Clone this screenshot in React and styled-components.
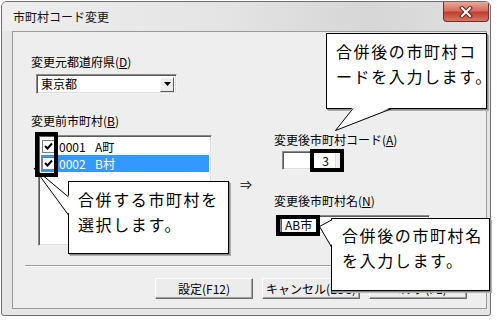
import React from 'react';
import styled, { createGlobalStyle } from 'styled-components';

const Global = createGlobalStyle`
  html, body { margin: 0; padding: 0; background: #fff; }
  body { font-family: "Noto Sans CJK JP", "Noto Sans", sans-serif; }
  #root { width: 497px; height: 321px; overflow: hidden; }
`;

const UI_FONT = `"Noto Sans CJK JP", "Noto Sans", sans-serif`;

const Stage = styled.div`
  position: relative;
  width: 497px;
  height: 321px;
  box-sizing: border-box;
  padding: 1px 0 0 1px;
`;

const Window = styled.div`
  width: 490px;
  height: 315px;
  box-sizing: border-box;
  border: 1px solid #6d6d6d;
  border-radius: 6px 6px 3px 3px;
  background: #e6e6e6;
  display: flex;
  flex-direction: column;
  overflow: hidden;
`;

const TitleBar = styled.div`
  height: 29px;
  display: flex;
  align-items: flex-start;
  justify-content: space-between;
  padding-left: 11px;
  background: linear-gradient(to right, #eeeeee, #e4e4e4 45%, #d6d6d6 75%, #e0e0e0);
`;

const Title = styled.div`
  font-family: ${UI_FONT};
  font-size: 12px;
  line-height: 14px;
  margin-top: 8px;
  color: #101010;
`;

const CloseButton = styled.div`
  width: 46px;
  height: 20px;
  margin-right: 1px;
  box-sizing: border-box;
  border: 1px solid #7b2b22;
  border-top: none;
  border-radius: 0 0 4px 4px;
  background: linear-gradient(#e7a899, #d66f5e 45%, #c2402f 55%, #d77563);
  display: flex;
  align-items: center;
  justify-content: center;
`;

const Client = styled.div`
  flex: 1;
  margin: 0 3px 6px 10px;
  border: 1px solid #9a9a9a;
  background: #eeeeee;
  display: flex;
  flex-direction: column;
  font-family: ${UI_FONT};
  font-size: 12px;
  color: #000;
`;

const Main = styled.div`
  height: 233px;
  display: flex;
`;

const LeftCol = styled.div`
  width: 200px;
  box-sizing: border-box;
  padding: 23px 0 0 18px;
  display: flex;
  flex-direction: column;
  align-items: flex-start;
`;

const ArrowCol = styled.div`
  width: 61px;
  box-sizing: border-box;
  padding: 146px 0 0 27px;
  line-height: 14px;
`;

const RightCol = styled.div`
  padding-top: 101px;
  display: flex;
  flex-direction: column;
  align-items: flex-start;
`;

const Label = styled.div`
  line-height: 14px;
  white-space: nowrap;
  margin-top: ${p => p.$mt || 0}px;
`;

const Under = styled.span`
  text-decoration: underline;
`;

const Sunken = styled.div`
  box-sizing: border-box;
  background: #fff;
  border: 1px solid;
  border-color: #8a8a8a #f4f4f4 #f4f4f4 #8a8a8a;
  box-shadow: inset 1px 1px 0 #5a5a5a, inset -1px -1px 0 #dcdcdc;
`;

const Combo = styled(Sunken)`
  width: 141px;
  height: 20px;
  margin: 5px 0 0 5px;
  display: flex;
  align-items: center;
  justify-content: space-between;
  padding: 2px;
  line-height: 14px;
`;

const ComboText = styled.span`
  padding-left: 2px;
`;

const DropButton = styled.div`
  width: 14px;
  height: 15px;
  box-sizing: border-box;
  background: #ececec;
  border: 1px solid;
  border-color: #ffffff #5a5a5a #5a5a5a #ffffff;
  display: flex;
  align-items: center;
  justify-content: center;
`;

const ListBox = styled(Sunken)`
  width: 174px;
  height: 111px;
  margin: 7px 0 0 7px;
  padding: 2px;
`;

const Row = styled.div`
  height: 17px;
  display: flex;
  align-items: center;
  gap: 4px;
  padding-left: 1px;
  background: ${p => (p.$selected ? '#3399ff' : 'transparent')};
  color: ${p => (p.$selected ? '#fff' : '#000')};
  line-height: 14px;
`;

const Code = styled.span`
  width: 32px;
`;

const Check = styled.div`
  width: 13px;
  height: 13px;
  box-sizing: border-box;
  border: 1px solid #7e7e7e;
  background: #fff;
  display: flex;
  align-items: center;
  justify-content: center;
`;

const TextBox = styled(Sunken)`
  width: ${p => p.$w}px;
  height: 19px;
  margin: ${p => p.$mt}px 0 0 ${p => p.$ml}px;
  display: flex;
  align-items: center;
  justify-content: ${p => (p.$right ? 'flex-end' : 'flex-start')};
  padding: 0 7px 0 4px;
  line-height: 14px;
`;

const Separator = styled.div`
  margin: 0 11px 0 12px;
  border-top: 1px solid #a0a0a0;
  border-bottom: 1px solid #ffffff;
`;

const ButtonRow = styled.div`
  display: flex;
  justify-content: flex-end;
  gap: 9px;
  padding: 11px 19px 0 0;
`;

const Button = styled.div`
  width: 98px;
  height: 21px;
  box-sizing: border-box;
  border: 1px solid;
  border-color: #ffffff #6a6a6a #6a6a6a #ffffff;
  box-shadow: inset -1px -1px 0 #a0a0a0;
  background: #ececec;
  display: flex;
  align-items: center;
  justify-content: center;
  line-height: 14px;
  white-space: nowrap;
`;

const Bubble = styled.div`
  position: absolute;
  left: ${p => p.$x}px;
  top: ${p => p.$y}px;
  width: ${p => p.$w}px;
  height: ${p => p.$h}px;
  box-sizing: border-box;
  border: 1px solid #000;
  box-shadow: 1px 1px 0 #8a8a8a, 2px 2px 0 #b0b0b0;
  background: #fff;
  padding: ${p => p.$pt}px 0 0 ${p => p.$pl}px;
  font-family: ${UI_FONT};
  font-size: 16px;
  letter-spacing: 1.6px;
  line-height: 25px;
  color: #000;
  white-space: pre;
`;

const Tails = styled.svg`
  position: absolute;
  left: 0;
  top: 0;
  pointer-events: none;
`;

const Highlight = styled.div`
  position: absolute;
  left: ${p => p.$x}px;
  top: ${p => p.$y}px;
  width: ${p => p.$w}px;
  height: ${p => p.$h}px;
  box-sizing: border-box;
  border: 4px solid #000;
`;

const CheckMark = () => (
  <svg width="9" height="9" viewBox="0 0 9 9">
    <path d="M1 4 L3.5 6.5 L8 1.5" fill="none" stroke="#000" strokeWidth="2" />
  </svg>
);

const Tail = ({ tip, a, b, fa, fb }) => (
  <>
    <polygon points={`${fa[0]},${fa[1]} ${tip[0]},${tip[1]} ${fb[0]},${fb[1]}`} fill="#fff" />
    <polyline
      points={`${a[0]},${a[1]} ${tip[0]},${tip[1]} ${b[0]},${b[1]}`}
      fill="none"
      stroke="#000"
      strokeWidth="1"
    />
  </>
);

export default function App() {
  return (
    <Stage>
      <Global />
      <Window>
        <TitleBar>
          <Title>市町村コード変更</Title>
          <CloseButton>
            <svg width="14" height="12" viewBox="0 0 14 12">
              <path d="M3 2 L11 10 M11 2 L3 10" stroke="#5a2a24" strokeWidth="4" strokeLinecap="square" />
              <path d="M3 2 L11 10 M11 2 L3 10" stroke="#ffffff" strokeWidth="2" strokeLinecap="square" />
            </svg>
          </CloseButton>
        </TitleBar>
        <Client>
          <Main>
            <LeftCol>
              <Label>変更元都道府県(<Under>D</Under>)</Label>
              <Combo>
                <ComboText>東京都</ComboText>
                <DropButton>
                  <svg width="7" height="4" viewBox="0 0 7 4">
                    <path d="M0 0 H7 L3.5 4 Z" fill="#000" />
                  </svg>
                </DropButton>
              </Combo>
              <Label $mt={20}>変更前市町村(<Under>B</Under>)</Label>
              <ListBox>
                <Row>
                  <Check><CheckMark /></Check>
                  <Code>0001</Code>
                  <span>A町</span>
                </Row>
                <Row $selected>
                  <Check><CheckMark /></Check>
                  <Code>0002</Code>
                  <span>B村</span>
                </Row>
              </ListBox>
            </LeftCol>
            <ArrowCol>⇒</ArrowCol>
            <RightCol>
              <Label>変更後市町村コード(<Under>A</Under>)</Label>
              <TextBox $w={55} $mt={4} $ml={8} $right>3</TextBox>
              <Label $mt={24}>変更後市町村名(<Under>N</Under>)</Label>
              <TextBox $w={150} $mt={7} $ml={6}>AB市</TextBox>
            </RightCol>
          </Main>
          <Separator />
          <ButtonRow>
            <Button>設定(F12)</Button>
            <Button>キャンセル(ESC)</Button>
            <Button>ヘルプ(F1)</Button>
          </ButtonRow>
        </Client>
      </Window>

      <Bubble $x={68} $y={181} $w={161} $h={73} $pt={5} $pl={9}>
        {'合併する市町村を\n選択します。'}
      </Bubble>
      <Bubble $x={326} $y={33} $w={161} $h={76} $pt={5} $pl={9}>
        {'合併後の市町村コ\nードを入力します。'}
      </Bubble>
      <Bubble $x={331} $y={218} $w={159} $h={73} $pt={4} $pl={10}>
        {'合併後の市町村名\nを入力します。'}
      </Bubble>

      <Tails width="497" height="321" viewBox="0 0 497 321">
        <Tail tip={[34, 168]} a={[68.5, 197]} b={[68.5, 215]} fa={[70, 197]} fb={[70, 215]} />
        <Tail tip={[335.5, 130.5]} a={[353, 108.5]} b={[392, 108.5]} fa={[353, 107]} fb={[392, 107]} />
        <Tail tip={[319.5, 226.5]} a={[331.5, 220]} b={[331.5, 247]} fa={[333, 220]} fb={[333, 247]} />
      </Tails>

      <Highlight $x={35} $y={132} $w={23} $h={45} />
      <Highlight $x={310} $y={149} $w={34} $h={23} />
      <Highlight $x={276} $y={215} $w={44} $h={21} />
    </Stage>
  );
}
